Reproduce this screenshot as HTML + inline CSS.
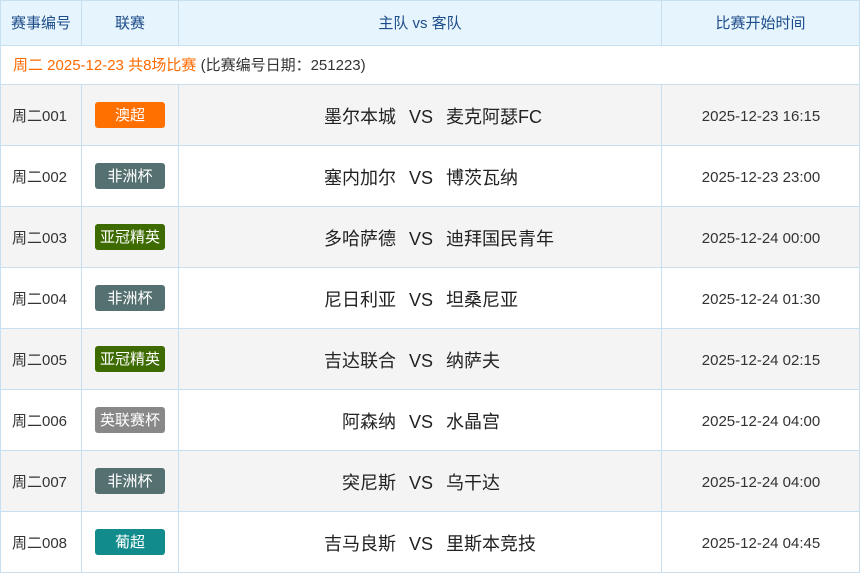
<!DOCTYPE html><html><head><meta charset="utf-8"><style>
*{margin:0;padding:0;box-sizing:border-box}
body{width:860px;height:570px;overflow:hidden;background:#fff;font-family:"Liberation Sans","Noto Sans CJK SC",sans-serif;position:relative}
.a{position:absolute}
.h{top:0;height:46px;background:#e6f4fd;border:1px solid #c8dff0;color:#1d4c8a;font-size:15px;line-height:45px;text-align:center}
.r{position:absolute;left:0;width:860px;height:61px;border-bottom:1px solid #c8dff0}
.c{position:absolute;top:2px;height:60px;line-height:60px;font-size:15px;color:#333}
.b{position:absolute;left:95px;top:17px;width:70px;height:26px;border-radius:3px;color:#fff;font-size:15px;line-height:27px;text-align:center}
.vl{position:absolute;top:0;height:61px;width:1px;background:#c8dff0}
.t{font-size:18px;color:#222}
</style></head><body>
<div class="a h" style="left:0;width:82px">赛事编号</div>
<div class="a h" style="left:81px;width:98px">联赛</div>
<div class="a h" style="left:178px;width:484px">主队 vs 客队</div>
<div class="a h" style="left:661px;width:199px">比赛开始时间</div>
<div class="a" style="left:0;top:46px;width:860px;height:39px;border-left:1px solid #c8dff0;border-right:1px solid #c8dff0;border-bottom:1px solid #c8dff0;line-height:39px;font-size:15px;padding-left:12px;color:#333"><span style="color:#ff6a00">周二 2025-12-23 共8场比赛</span> (比赛编号日期：251223)</div>
<div id="rows"></div>
<script>
var d=[["001","澳超","#ff7000","墨尔本城","麦克阿瑟FC","2025-12-23 16:15"],
["002","非洲杯","#557070","塞内加尔","博茨瓦纳","2025-12-23 23:00"],
["003","亚冠精英","#3d6b00","多哈萨德","迪拜国民青年","2025-12-24 00:00"],
["004","非洲杯","#557070","尼日利亚","坦桑尼亚","2025-12-24 01:30"],
["005","亚冠精英","#3d6b00","吉达联合","纳萨夫","2025-12-24 02:15"],
["006","英联赛杯","#888888","阿森纳","水晶宫","2025-12-24 04:00"],
["007","非洲杯","#557070","突尼斯","乌干达","2025-12-24 04:00"],
["008","葡超","#118b8b","吉马良斯","里斯本竞技","2025-12-24 04:45"]];
var h="";d.forEach(function(x,i){var y=85+i*61;h+='<div class="r" style="top:'+y+'px;background:'+(i%2?'#fff':'#f4f4f4')+'">'+
'<div class="vl" style="left:0"></div><div class="vl" style="left:81px"></div><div class="vl" style="left:178px"></div><div class="vl" style="left:661px"></div><div class="vl" style="left:859px"></div>'+
'<div class="c" style="left:12px">周二'+x[0]+'</div><div class="b" style="background:'+x[2]+'">'+x[1]+'</div>'+
'<div class="c t" style="right:464px;text-align:right">'+x[3]+'</div><div class="c t" style="left:409px">VS</div><div class="c t" style="left:446px">'+x[4]+'</div>'+
'<div class="c" style="left:662px;width:198px;text-align:center">'+x[5]+'</div></div>';});
document.getElementById("rows").innerHTML=h;
</script>
</body></html>
